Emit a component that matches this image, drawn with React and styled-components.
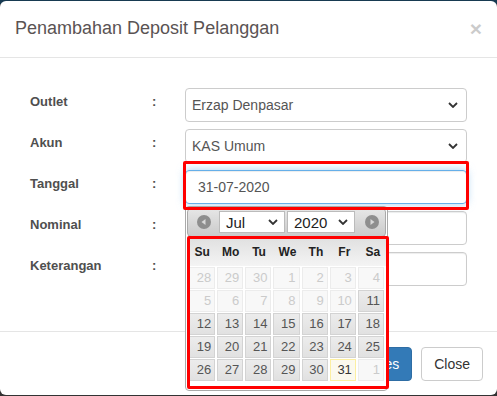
import React from 'react'
import styled, { createGlobalStyle } from 'styled-components'

const GlobalStyle = createGlobalStyle`
  html, body {
    margin: 0;
    padding: 0;
    height: 100%;
    overflow: hidden;
  }
  body {
    background: linear-gradient(to bottom, #173a51 0, #173a51 4px, #3b3b3b 4px, #333 100%);
    font-family: "Liberation Sans", Arial, sans-serif;
  }
`

const Modal = styled.div`
  margin-top: 1px;
  width: 497px;
  background: #fff;
  border-radius: 6px;
`

const Header = styled.div`
  display: flex;
  justify-content: space-between;
  align-items: flex-start;
  padding: 15px;
  border-bottom: 1px solid #e5e5e5;
`

const Title = styled.h4`
  margin: 0;
  font-size: 18px;
  font-weight: normal;
  line-height: 25.7px;
  color: #5a5353;
`

const CloseX = styled.span`
  font-size: 21px;
  font-weight: bold;
  line-height: 1;
  color: #000;
  opacity: 0.2;
  margin-top: 2px;
`

const Body = styled.div`
  padding: 30px 30px 45px 30px;
`

const Form = styled.div`
  display: grid;
  grid-template-columns: 122px 33px 282px;
  row-gap: 7px;
`

const Label = styled.div`
  padding-top: 4px;
  font-size: 13px;
  font-weight: bold;
  line-height: 20px;
  color: #4f4f4f;
`

const Colon = styled(Label)``

const Field = styled.div`
  position: relative;
  z-index: ${p => (p.raised ? 3 : 'auto')};
`

const SelectBox = styled.div`
  box-sizing: border-box;
  height: 34px;
  display: flex;
  align-items: center;
  justify-content: space-between;
  padding: 0 8px 0 6px;
  border: 1px solid #ccc;
  border-radius: 4px;
  font-size: 14px;
  color: #555;
`

const Input = styled.div`
  box-sizing: border-box;
  height: 34px;
  display: flex;
  align-items: center;
  padding: 0 12px;
  border: 1px solid ${p => (p.focused ? '#66afe9' : '#ccc')};
  border-radius: 4px;
  font-size: 14px;
  color: #555;
  box-shadow: ${p =>
    p.focused
      ? 'inset 0 1px 1px rgba(0,0,0,.075), 0 0 8px rgba(102,175,233,.6)'
      : 'inset 0 1px 1px rgba(0,0,0,.075)'};
`

const Highlight = styled.div`
  position: absolute;
  top: ${p => p.top}px;
  left: ${p => p.left}px;
  right: ${p => p.right}px;
  bottom: ${p => p.bottom}px;
  border: 3px solid #f00;
  border-radius: 2px;
  pointer-events: none;
  z-index: 5;
`

const Picker = styled.div`
  position: absolute;
  top: 36px;
  left: 0;
  z-index: 4;
  box-sizing: border-box;
  width: 203px;
  padding: 1px;
  background: #fff;
  border: 1px solid #aaa;
  border-radius: 4px;
`

const PickerHead = styled.div`
  display: flex;
  align-items: center;
  height: 27px;
  border: 1px solid #aaa;
  border-radius: 4px;
  background: linear-gradient(#e6e6e6, #cacaca);
`

const NavIcon = styled.svg`
  flex: none;
  margin-left: ${p => p.ml}px;
`

const SmallSelect = styled.div`
  box-sizing: border-box;
  width: ${p => p.w}px;
  height: 22px;
  margin-left: ${p => p.ml}px;
  display: flex;
  align-items: center;
  justify-content: space-between;
  padding: 0 6px 0 6px;
  background: #fff;
  border: 1px solid #bbb;
  font-size: 15px;
  color: #222;
`

const Calendar = styled.div`
  position: relative;
  margin-top: 1px;
  padding: 0 0 8px 2px;
`

const WeekHead = styled.div`
  display: grid;
  grid-template-columns: repeat(7, 1fr);
  column-gap: 2px;
  height: 28px;
  align-items: center;
  background: linear-gradient(#e0e0e0, #f4f4f4);
  margin-left: -2px;
  padding-left: 2px;
  width: 197px;
`

const WeekDay = styled.div`
  text-align: center;
  font-size: 12px;
  font-weight: bold;
  color: #222;
`

const Days = styled.div`
  display: grid;
  grid-template-columns: repeat(7, 1fr);
  grid-auto-rows: 22px;
  gap: 1px 2px;
  width: 195px;
  margin-top: 1px;
`

const Day = styled.div`
  box-sizing: border-box;
  display: flex;
  align-items: center;
  justify-content: flex-end;
  padding-right: 3px;
  font-size: 13px;
  border: 1px solid
    ${p => (p.kind === 'today' ? '#fcefa1' : p.kind === 'off' ? '#ececec' : '#d3d3d3')};
  background: ${p =>
    p.kind === 'today'
      ? '#fbf9ee'
      : p.kind === 'off'
      ? '#f8f8f8'
      : 'linear-gradient(#ececec, #e1e1e1)'};
  color: ${p => (p.kind === 'today' ? '#363636' : p.kind === 'off' ? '#cbcbcb' : '#555')};
`

const Footer = styled.div`
  display: flex;
  justify-content: flex-end;
  gap: 9px;
  padding: 15px 14px 14px;
  border-top: 1px solid #e5e5e5;
`

const Button = styled.button`
  height: 34px;
  padding: 0 12px;
  font-family: "Liberation Sans", Arial, sans-serif;
  font-size: 14px;
  border-radius: 4px;
  border: 1px solid ${p => (p.primary ? '#2e6da4' : '#ccc')};
  background: ${p => (p.primary ? '#337ab7' : '#fff')};
  color: ${p => (p.primary ? '#fff' : '#333')};
`

const Chevron = ({ size = 10 }) => (
  <svg width={size} height={size * 0.6} viewBox="0 0 10 6">
    <polyline points="1,1 5,5 9,1" fill="none" stroke="#333" strokeWidth="1.8" />
  </svg>
)

const NavButton = ({ dir, ml }) => (
  <NavIcon ml={ml} width="14" height="14" viewBox="0 0 14 14">
    <circle cx="7" cy="7" r="7" fill="#8e8e8e" />
    {dir === 'prev' ? (
      <polygon points="8.5,4 8.5,10 4.5,7" fill="#d8d8d8" />
    ) : (
      <polygon points="5.5,4 5.5,10 9.5,7" fill="#d8d8d8" />
    )}
  </NavIcon>
)

const weekDays = ['Su', 'Mo', 'Tu', 'We', 'Th', 'Fr', 'Sa']

const days = [
  ...[28, 29, 30].map(d => ({ d, kind: 'off' })),
  ...Array.from({ length: 10 }, (_, i) => ({ d: i + 1, kind: 'off' })),
  ...Array.from({ length: 20 }, (_, i) => ({ d: i + 11, kind: 'on' })),
  { d: 31, kind: 'today' },
  { d: 1, kind: 'off' }
]

const DatePicker = () => (
  <Picker>
    <PickerHead>
      <NavButton dir="prev" ml={9} />
      <SmallSelect w={66} ml={8}>
        <span>Jul</span>
        <Chevron />
      </SmallSelect>
      <SmallSelect w={68} ml={2}>
        <span>2020</span>
        <Chevron />
      </SmallSelect>
      <NavButton dir="next" ml={10} />
    </PickerHead>
    <Calendar>
      <WeekHead>
        {weekDays.map(w => (
          <WeekDay key={w}>{w}</WeekDay>
        ))}
      </WeekHead>
      <Days>
        {days.map((x, i) => (
          <Day key={i} kind={x.kind}>
            {x.d}
          </Day>
        ))}
      </Days>
      <Highlight top={-2} left={0} right={-3} bottom={0} />
    </Calendar>
  </Picker>
)

const App = () => {
  return (
    <>
      <GlobalStyle />
      <Modal>
        <Header>
          <Title>Penambahan Deposit Pelanggan</Title>
          <CloseX>×</CloseX>
        </Header>
        <Body>
          <Form>
            <Label>Outlet</Label>
            <Colon>:</Colon>
            <Field>
              <SelectBox>
                <span>Erzap Denpasar</span>
                <Chevron />
              </SelectBox>
            </Field>

            <Label>Akun</Label>
            <Colon>:</Colon>
            <Field>
              <SelectBox>
                <span>KAS Umum</span>
                <Chevron />
              </SelectBox>
            </Field>

            <Label>Tanggal</Label>
            <Colon>:</Colon>
            <Field raised>
              <Input focused>31-07-2020</Input>
              <Highlight top={-9} left={-2} right={-2} bottom={-6} />
              <DatePicker />
            </Field>

            <Label>Nominal</Label>
            <Colon>:</Colon>
            <Field>
              <Input />
            </Field>

            <Label>Keterangan</Label>
            <Colon>:</Colon>
            <Field>
              <Input />
            </Field>
          </Form>
        </Body>
        <Footer>
          <Button primary>Save Changes</Button>
          <Button>Close</Button>
        </Footer>
      </Modal>
    </>
  )
}

export default App
